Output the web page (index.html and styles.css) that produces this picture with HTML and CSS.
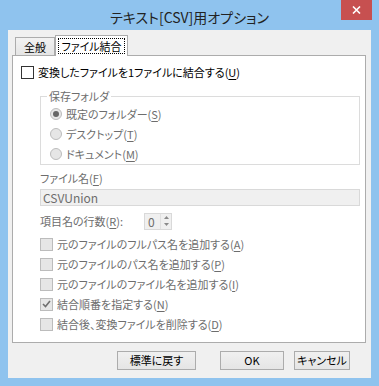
FILE: index.html
```html
<!DOCTYPE html>
<html lang="ja">
<head>
    <meta charset="UTF-8">
    <title>テキスト[CSV]用オプション</title>
    <link rel="stylesheet" href="styles.css">
</head>
<body>
    <div class="window">
        <div class="titlebar">
            <span class="title">テキスト[CSV]用オプション</span>
            <span class="close">
                <svg width="9" height="8" viewBox="0 0 9 8"><path d="M1 0.5 L8 7.5 M8 0.5 L1 7.5" stroke="#fff" stroke-width="1.6"/></svg>
            </span>
        </div>

        <div class="client">
            <div class="tabs">
                <span class="tab">全般</span>
                <span class="tab active"><span class="focus">ファイル結合</span></span>
            </div>

            <div class="panel">
                <div class="row">
                    <span class="box"></span>変換したファイルを1ファイルに結合する(<u>U</u>)
                </div>

                <fieldset class="group">
                    <legend>保存フォルダ</legend>
                    <div class="row dim"><span class="radio on"></span>既定のフォルダー(<u>S</u>)</div>
                    <div class="row dim"><span class="radio"></span>デスクトップ(<u>T</u>)</div>
                    <div class="row dim"><span class="radio"></span>ドキュメント(<u>M</u>)</div>
                </fieldset>

                <div class="field-label dim">ファイル名(<u>F</u>)</div>
                <div class="textbox">CSVUnion</div>

                <div class="row dim spin-row">
                    <span class="spin-label">項目名の行数(<u>R</u>):</span>
                    <span class="spin">
                        <span class="spin-val">0</span>
                        <span class="spin-btns">
                            <span class="spin-btn"><svg width="5" height="3" viewBox="0 0 5 3"><path d="M0 3 L2.5 0 L5 3 Z" fill="#8a8a8a"/></svg></span>
                            <span class="spin-btn"><svg width="5" height="3" viewBox="0 0 5 3"><path d="M0 0 L2.5 3 L5 0 Z" fill="#8a8a8a"/></svg></span>
                        </span>
                    </span>
                </div>

                <div class="opts">
                    <div class="row dim"><span class="box off"></span>元のファイルのフルパス名を追加する(<u>A</u>)</div>
                    <div class="row dim"><span class="box off"></span>元のファイルのパス名を追加する(<u>P</u>)</div>
                    <div class="row dim"><span class="box off"></span>元のファイルのファイル名を追加する(<u>I</u>)</div>
                    <div class="row dim">
                        <span class="box off">
                            <svg width="9" height="8" viewBox="0 0 9 8"><path d="M1 4 L3.5 6.5 L8 1" fill="none" stroke="#6f6f6f" stroke-width="1.6"/></svg>
                        </span>結合順番を指定する(<u>N</u>)
                    </div>
                    <div class="row dim"><span class="box off"></span>結合後、変換ファイルを削除する(<u>D</u>)</div>
                </div>
            </div>

            <div class="buttons">
                <button class="btn reset">標準に戻す</button>
                <button class="btn ok">OK</button>
                <button class="btn cancel">キャンセル</button>
            </div>
        </div>
    </div>
</body>
</html>
```

FILE: styles.css
```css
body {
    margin: 0;
    font-family: "Noto Sans CJK JP", "Noto Sans", sans-serif;
    font-size: 11px;
    font-feature-settings: "palt";
    color: #000;
}
u {
    text-decoration-thickness: 1px;
    text-underline-offset: 2px;
}
.window {
    width: 379px;
    height: 386px;
    box-sizing: border-box;
    padding: 0 8px 8px;
    background-color: #8fc3ee;
    display: flex;
    flex-direction: column;
}
.titlebar {
    height: 30px;
    position: relative;
    display: flex;
    align-items: center;
    justify-content: center;
}
.title {
    font-size: 14px;
    color: #222;
    margin-top: 3px;
}
.close {
    position: absolute;
    top: 0;
    right: -1px;
    width: 31px;
    height: 20px;
    background-color: #c75050;
    display: flex;
    align-items: center;
    justify-content: center;
}
.client {
    flex: 1;
    background-color: #f0f0f0;
    padding: 5px 5px 0 4px;
}

/* tabs */
.tabs {
    display: flex;
    align-items: flex-end;
    height: 20px;
    padding-left: 3px;
}
.tab {
    width: 40px;
    height: 18px;
    box-sizing: border-box;
    border: 1px solid #acacac;
    border-bottom: none;
    background: linear-gradient(#f2f2f2, #e5e5e5);
    display: flex;
    align-items: center;
    justify-content: center;
    white-space: nowrap;
}
.tab.active {
    width: 73px;
    height: 21px;
    margin-bottom: -1px;
    background: #fff;
    position: relative;
    z-index: 1;
}
.focus {
    outline: 1px dotted #000;
    padding: 0 2px;
    line-height: 14px;
}
.panel {
    height: 288px;
    box-sizing: border-box;
    border: 1px solid #acacac;
    background-color: #fff;
    padding: 6px 5px 0 8px;
}

/* rows */
.row {
    display: flex;
    align-items: center;
    height: 20px;
    white-space: nowrap;
}
.dim {
    color: #6d6d6d;
}
.box {
    width: 13px;
    height: 13px;
    box-sizing: border-box;
    border: 1px solid #333;
    background-color: #fff;
    margin-right: 4px;
    flex: none;
    display: flex;
    align-items: center;
    justify-content: center;
}
.box.off {
    border-color: #bcbcbc;
    background-color: #e6e6e6;
}
.group {
    margin: 6px 0 0 19px;
    padding: 0 0 0 9px;
    border: 1px solid #dcdcdc;
    min-width: 0;
}
.group legend {
    padding: 0 2px;
    margin-left: -3px;
    line-height: 16px;
    color: #6d6d6d;
}
.radio {
    width: 12px;
    height: 12px;
    box-sizing: border-box;
    border: 1px solid #bcbcbc;
    border-radius: 50%;
    background-color: #e6e6e6;
    margin-right: 4px;
    flex: none;
    display: flex;
    align-items: center;
    justify-content: center;
}
.radio.on::after {
    content: "";
    width: 6px;
    height: 6px;
    border-radius: 50%;
    background-color: #666;
}
.field-label {
    margin: 5px 0 0 19px;
    line-height: 16px;
}
.textbox {
    margin: 3px 0 0 19px;
    height: 17px;
    box-sizing: border-box;
    border: 1px solid #d9d9d9;
    background-color: #f0f0f0;
    color: #6d6d6d;
    padding-left: 2px;
    font-size: 12px;
    line-height: 15px;
}
.spin-row {
    margin: 5px 0 0 19px;
}
.spin-label {
    width: 104px;
}
.spin {
    display: flex;
    width: 28px;
    height: 17px;
    box-sizing: border-box;
    border: 1px solid #d9d9d9;
    background-color: #f0f0f0;
}
.spin-val {
    width: 12px;
    padding-left: 3px;
    font-size: 12px;
    line-height: 15px;
}
.spin-btns {
    flex: 1;
    display: flex;
    flex-direction: column;
    border-left: 1px solid #e0e0e0;
}
.spin-btn {
    flex: 1;
    display: flex;
    align-items: center;
    justify-content: center;
}
.opts {
    margin: 3px 0 0 19px;
}

/* buttons */
.buttons {
    display: flex;
    justify-content: flex-end;
    padding: 8px 16px 0 0;
}
.btn {
    height: 19px;
    box-sizing: border-box;
    border: 1px solid #acacac;
    background: linear-gradient(#f0f0f0, #e5e5e5);
    font-family: inherit;
    font-size: 11px;
    font-feature-settings: "palt";
    color: #000;
    padding: 0;
    line-height: 15px;
    white-space: nowrap;
}
.reset {
    width: 79px;
    margin-right: 24px;
}
.ok {
    width: 64px;
    margin-right: 10px;
}
.cancel {
    width: 56px;
}
```
